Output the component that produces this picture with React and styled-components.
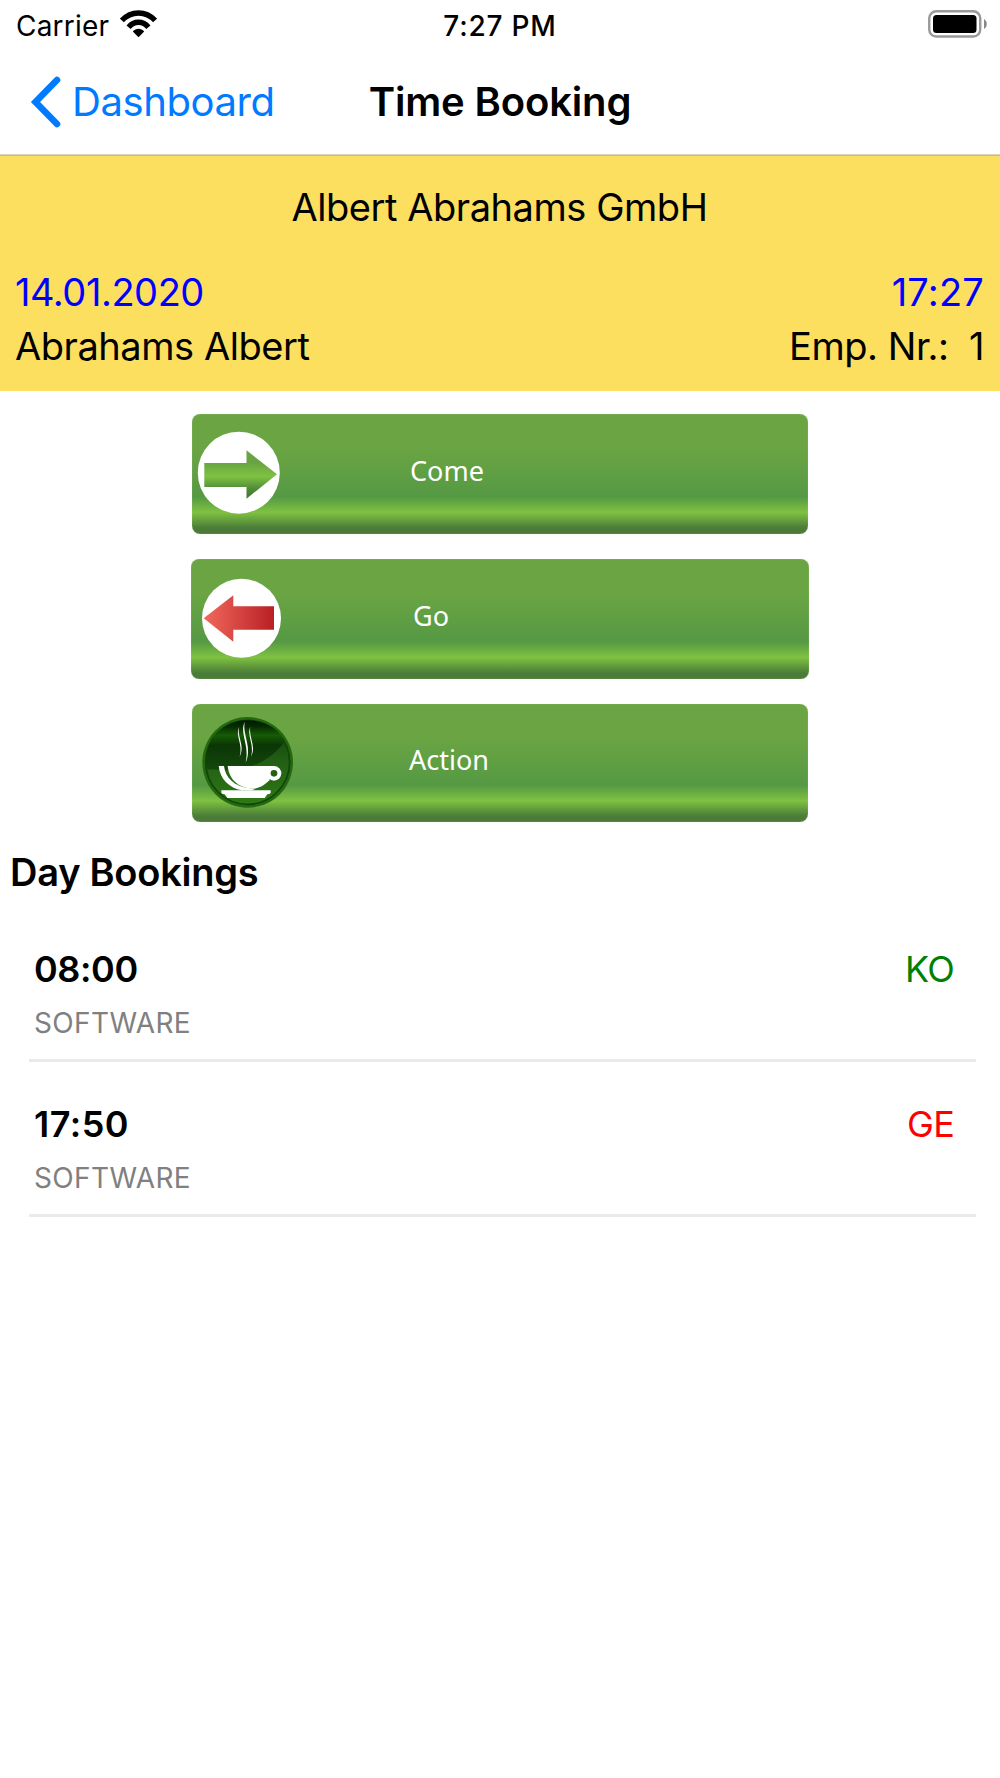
import React from 'react';
import styled, { createGlobalStyle } from 'styled-components';

const GlobalStyle = createGlobalStyle`
  * {
    box-sizing: border-box;
  }
  body {
    margin: 0;
    background-color: #fff;
    color: #000;
    font-family: Inter, 'Liberation Sans', sans-serif;
  }
  svg {
    display: block;
  }
`;

const Screen = styled.div`
  width: 1000px;
  min-height: 1778px;
  background-color: #fff;
`;

const StatusBar = styled.div`
  display: grid;
  grid-template-columns: 1fr auto 1fr;
  align-items: center;
  height: 51px;
  padding: 0 16px;
  font-size: 28px;
  line-height: 50px;
`;

const Carrier = styled.div`
  display: flex;
  align-items: center;
  gap: 11px;
  letter-spacing: 0.2px;
  svg {
    margin-bottom: 4px;
  }
`;

const Clock = styled.div`
  font-weight: 500;
  letter-spacing: 0.8px;
`;

const BatteryBox = styled.div`
  justify-self: end;
  margin: 0 -3px 3px 0;
`;

const NavBar = styled.nav`
  display: grid;
  grid-template-columns: 1fr auto 1fr;
  align-items: center;
  height: 155px;
  margin-top: -51px;
  padding: 51px 30px 2px;
  border-bottom: 1px solid #dad5bf;
  font-size: 40px;
  line-height: 50px;
`;

const BackLink = styled.a`
  display: flex;
  align-items: center;
  gap: 10px;
  color: #007aff;
  letter-spacing: -0.4px;
  text-decoration: none;
`;

const NavTitle = styled.h1`
  margin: 0;
  font-size: 40px;
  font-weight: 600;
  letter-spacing: -0.15px;
`;

const Header = styled.header`
  height: 236px;
  padding: 0 16px 0 15px;
  border-top: 1px solid #d9bd55;
  background-color: #fcdf5e;
  font-size: 38px;
  letter-spacing: -0.45px;
`;

const Company = styled.div`
  height: 103px;
  margin-bottom: 6px;
  line-height: 103px;
  text-align: center;
`;

const HeaderRow = styled.div`
  display: flex;
  justify-content: space-between;
  height: 54px;
  line-height: 54px;
  white-space: pre;
  color: ${(props) => props.$color || '#000'};
`;

const ClockTime = styled.span`
  letter-spacing: 0.2px;
`;

const Actions = styled.div`
  display: flex;
  flex-direction: column;
  align-items: center;
  gap: 25px;
  padding: 23px 0 0;
`;

const ActionButton = styled.button`
  display: flex;
  align-items: center;
  width: ${(props) => props.$width}px;
  height: ${(props) => props.$height}px;
  padding: 0;
  border: 0;
  border-radius: 8px;
  background: linear-gradient(
    #6ba543 0%,
    #6ba543 28%,
    #559944 69%,
    #7fc241 82%,
    #4a7c38 95%,
    #4a7c38 100%
  );
  box-shadow: inset 0 0 1px #b9d6a6;
  text-align: left;
`;

const ActionLabel = styled.span`
  padding-bottom: 7px;
  margin-left: ${(props) => props.$left}px;
  color: #fff;
  font-family: 'Noto Sans', 'Open Sans', sans-serif;
  font-size: 27px;
  line-height: 40px;
`;

const SectionTitle = styled.h2`
  margin: 24px 0 9px;
  padding-left: 10px;
  font-size: 38px;
  font-weight: 600;
  letter-spacing: -0.25px;
  line-height: 52px;
`;

const BookingList = styled.ul`
  margin: 0;
  padding: 0 24px 0 29px;
  list-style: none;
`;

const Booking = styled.li`
  display: flex;
  justify-content: space-between;
  height: 155px;
  padding: 38px 22px 0 5px;
  border-bottom: 3px solid #eaeaea;
`;

const BookingTime = styled.div`
  font-size: 36px;
  font-weight: 600;
  letter-spacing: ${(props) => props.$spacing}px;
  line-height: 48px;
`;

const BookingUnit = styled.div`
  margin-top: 10px;
  color: #808080;
  font-size: 28px;
  letter-spacing: 0.35px;
  line-height: 40px;
`;

const BookingCode = styled.div`
  color: ${(props) => props.$color};
  font-size: 36px;
  letter-spacing: -0.8px;
  line-height: 48px;
`;

function WifiIcon() {
  return (
    <svg width="37" height="28" viewBox="0 0 37 28">
      <path
        d="M1.9 10.5 C11 0.4 26 0.4 35.1 10.5"
        fill="none"
        stroke="#000"
        strokeWidth="5.5"
      />
      <path
        d="M8.6 17.2 C14 10.6 23 10.6 28.4 17.2"
        fill="none"
        stroke="#000"
        strokeWidth="5.4"
      />
      <path d="M12.8 21.4 C16 17.8 21 17.8 24.2 21.4 L18.5 27.2 Z" />
    </svg>
  );
}

function BatteryIcon() {
  return (
    <svg width="59" height="28" viewBox="0 0 59 28">
      <rect
        x="1.25"
        y="1.25"
        width="51"
        height="25.3"
        rx="7"
        fill="none"
        stroke="#999"
        strokeWidth="2.4"
      />
      <rect x="5" y="5" width="43.5" height="18" rx="3.5" />
      <path d="M56 9 C59.7 11 59.7 17 56 19 Z" fill="#888" />
    </svg>
  );
}

function BackIcon() {
  return (
    <svg width="32" height="52" viewBox="0 0 32 52">
      <path
        d="M27 4 L5.5 26 L27 48"
        fill="none"
        stroke="#007aff"
        strokeWidth="6.6"
        strokeLinecap="round"
      />
    </svg>
  );
}

function ComeIcon() {
  return (
    <svg width="120" height="120" viewBox="0 0 120 120">
      <defs>
        <linearGradient id="come" x1="0" y1="0" x2="0" y2="1">
          <stop offset="0" stopColor="#6ba543" />
          <stop offset="0.25" stopColor="#68a343" />
          <stop offset="0.54" stopColor="#7fc241" />
          <stop offset="0.8" stopColor="#4f8a3b" />
          <stop offset="1" stopColor="#44752f" />
        </linearGradient>
      </defs>
      <circle cx="46.8" cy="58.7" r="41" fill="#fff" />
      <path
        d="M12.3 49 H54.5 V36.3 L85 60.3 L54.5 84.7 V73 H12.3 Z"
        fill="url(#come)"
      />
    </svg>
  );
}

function GoIcon() {
  return (
    <svg width="120" height="120" viewBox="0 0 120 120">
      <defs>
        <linearGradient id="go" x1="0" y1="0" x2="1" y2="0">
          <stop offset="0" stopColor="#f0695c" />
          <stop offset="1" stopColor="#b92024" />
        </linearGradient>
      </defs>
      <circle cx="50.5" cy="59.3" r="39.5" fill="#fff" />
      <path
        d="M12.7 59.3 L42.3 36.3 V47.3 H83 V70.7 H42.3 V82.7 Z"
        fill="url(#go)"
      />
    </svg>
  );
}

function CoffeeIcon() {
  return (
    <svg width="120" height="118" viewBox="0 0 360 354">
      <defs>
        <linearGradient id="gloss" x1="0" y1="0" x2="0" y2="1">
          <stop offset="0" stopColor="#021a01" />
          <stop offset="0.12" stopColor="#052a02" />
          <stop offset="0.3" stopColor="#165c04" />
          <stop offset="0.5" stopColor="#0b3606" />
          <stop offset="1" stopColor="#14480d" />
        </linearGradient>
        <linearGradient id="disc" x1="0" y1="0" x2="0" y2="1">
          <stop offset="0" stopColor="#0a3a04" />
          <stop offset="0.45" stopColor="#215c14" />
          <stop offset="1" stopColor="#2f7a14" />
        </linearGradient>
      </defs>
      <circle cx="167" cy="175" r="136" fill="#25690f" />
      <circle cx="167" cy="175" r="126" fill="url(#disc)" stroke="#12450a" strokeWidth="5" />
      <path
        d="M41 196 C32 112 92 49 167 49 C220 49 260 75 278 111 C248 160 180 198 110 198 Z"
        fill="url(#gloss)"
      />
      <g fill="#fff">
        <path d="M141 68 C129 95 154 120 143 158 C160 125 135 100 141 68 Z" />
        <path d="M158 53 C142 88 174 125 161 176 C182 130 151 95 158 53 Z" />
        <path d="M175 68 C163 95 188 120 177 158 C194 125 169 100 175 68 Z" />
        <path d="M80 186 H96 C100 222 128 247 168 252 L190 254 L180 259 H150 C112 252 84 226 80 186 Z" />
        <path d="M107 186 H246 L232 229 C220 241 208 250 188 254 C145 254 112 232 107 186 Z" />
        <circle cx="246" cy="208" r="22" />
        <path d="M88 259 H236 V266 Q233 271 226 271 L218 282 H106 L98 271 Q90 271 88 266 Z" />
      </g>
      <circle cx="246" cy="208" r="10" fill="#245f13" />
    </svg>
  );
}

const actions = [
  { label: 'Come', icon: <ComeIcon />, width: 616, height: 120, left: 98 },
  { label: 'Go', icon: <GoIcon />, width: 618, height: 120, left: 102 },
  { label: 'Action', icon: <CoffeeIcon />, width: 616, height: 118, left: 97 },
];

const bookings = [
  { time: '08:00', spacing: -0.4, unit: 'SOFTWARE', code: 'KO', color: '#008000' },
  { time: '17:50', spacing: 0.5, unit: 'SOFTWARE', code: 'GE', color: '#ff0000' },
];

function App() {
  return (
    <>
      <GlobalStyle />
      <Screen>
        <StatusBar>
          <Carrier>
            Carrier
            <WifiIcon />
          </Carrier>
          <Clock>7:27 PM</Clock>
          <BatteryBox>
            <BatteryIcon />
          </BatteryBox>
        </StatusBar>
        <NavBar>
          <BackLink href="#">
            <BackIcon />
            Dashboard
          </BackLink>
          <NavTitle>Time Booking</NavTitle>
        </NavBar>
        <Header>
          <Company>Albert Abrahams GmbH</Company>
          <HeaderRow $color="#0000ff">
            <span>14.01.2020</span>
            <ClockTime>17:27</ClockTime>
          </HeaderRow>
          <HeaderRow>
            <span>Abrahams Albert</span>
            <span>{'Emp. Nr.:  1'}</span>
          </HeaderRow>
        </Header>
        <Actions>
          {actions.map((action) => (
            <ActionButton
              key={action.label}
              $width={action.width}
              $height={action.height}
            >
              {action.icon}
              <ActionLabel $left={action.left}>{action.label}</ActionLabel>
            </ActionButton>
          ))}
        </Actions>
        <SectionTitle>Day Bookings</SectionTitle>
        <BookingList>
          {bookings.map((booking) => (
            <Booking key={booking.time}>
              <div>
                <BookingTime $spacing={booking.spacing}>{booking.time}</BookingTime>
                <BookingUnit>{booking.unit}</BookingUnit>
              </div>
              <BookingCode $color={booking.color}>{booking.code}</BookingCode>
            </Booking>
          ))}
        </BookingList>
      </Screen>
    </>
  );
}

export default App;
